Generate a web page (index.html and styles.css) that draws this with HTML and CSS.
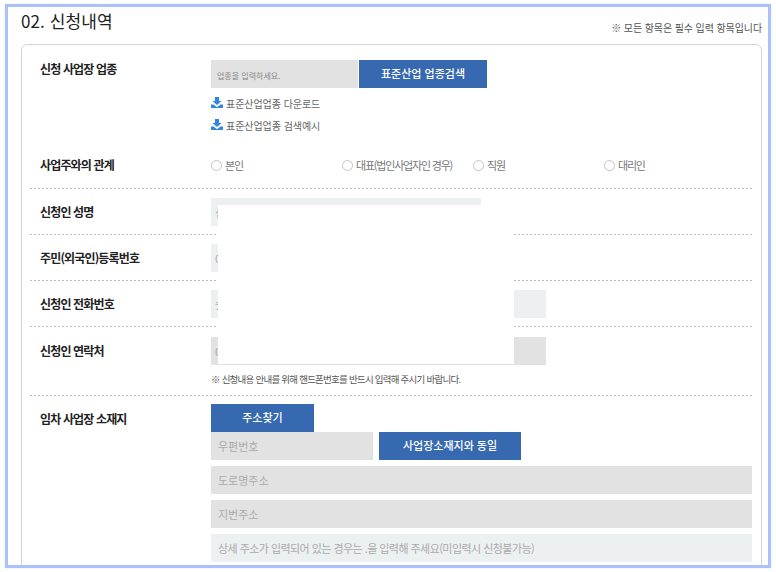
FILE: index.html
```html
<!DOCTYPE html>
<html lang="ko">
<head>
<meta charset="utf-8">
<title>신청내역</title>
<link rel="stylesheet" href="styles.css">
</head>
<body>
<div class="frame">
  <div class="head">
    <h2 class="title">02. 신청내역</h2>
    <p class="req">※ 모든 항목은 필수 입력 항목입니다</p>
  </div>
  <div class="panel">
    <div class="row row-a">
      <div class="label">신청 사업장 업종</div>
      <div class="body">
        <div class="line">
          <div class="field gray w147 tiny">업종을 입력하세요.</div>
          <div class="btn w128 join">표준산업 업종검색</div>
        </div>
        <div class="link first">
          <svg class="dl" viewBox="0 0 12 11"><path d="M4 0h4v4h2.6L6 8 1.400 4H4z"/><path d="M0 7.500h2.500L6 10.200 9.500 7.500H12V11H0z"/></svg>
          <span>표준산업업종 다운로드</span>
        </div>
        <div class="link">
          <svg class="dl" viewBox="0 0 12 11"><path d="M4 0h4v4h2.6L6 8 1.400 4H4z"/><path d="M0 7.500h2.500L6 10.200 9.500 7.500H12V11H0z"/></svg>
          <span>표준산업업종 검색예시</span>
        </div>
      </div>
    </div>
    <div class="row row-b dashed">
      <div class="label">사업주와의 관계</div>
      <div class="radios">
        <div class="radio"><i></i>본인</div>
        <div class="radio"><i></i>대표(법인사업자인 경우)</div>
        <div class="radio"><i></i>직원</div>
        <div class="radio"><i></i>대리인</div>
      </div>
    </div>
    <div class="row row-c dashed">
      <div class="label">신청인 성명</div>
      <div class="field pale w270 peek">신청인 성명</div>
    </div>
    <div class="row row-c dashed">
      <div class="label">주민(외국인)등록번호</div>
      <div class="field pale w270 peek">000000-0000000</div>
    </div>
    <div class="row row-c dashed">
      <div class="label">신청인 전화번호</div>
      <div class="field pale w335 peek">숫자만 입력</div>
    </div>
    <div class="row row-d dashed">
      <div class="label">신청인 연락처</div>
      <div class="body">
        <div class="field gray w335 peek">010-0000-0000</div>
        <p class="note">※ 신청내용 안내를 위해 핸드폰번호를 반드시 입력해 주시기 바랍니다.</p>
      </div>
    </div>
    <div class="row row-e">
      <div class="label">임차 사업장 소재지</div>
      <div class="body addr">
        <div class="btn w103">주소찾기</div>
        <div class="line gap6">
          <div class="field gray w162">우편번호</div>
          <div class="btn w142">사업장소재지와 동일</div>
        </div>
        <div class="field gray full mt6">도로명주소</div>
        <div class="field gray full mt6">지번주소</div>
        <div class="field pale full mt6 long">상세 주소가 입력되어 있는 경우는 .을 입력해 주세요(미입력시 신청불가능)</div>
      </div>
    </div>
    <div class="mask"></div>
  </div>
</div>
</body>
</html>
```

FILE: styles.css
```css
* { box-sizing: border-box; }
html, body { margin: 0; padding: 0; background: #fff; }
body {
  width: 776px;
  height: 572px;
  overflow: hidden;
  padding: 4px 5px;
  font-family: "Noto Sans CJK KR", "Noto Sans", sans-serif;
}
.frame {
  width: 766px;
  height: 564px;
  border: 3px solid #a9c2fb;
  padding: 0 6px 0 13px;
  background: #fff;
  overflow: hidden;
  box-shadow: 0 0 1px #c8d6fa;
}
.head {
  height: 37px;
  display: flex;
  justify-content: space-between;
}
.title {
  margin: 0;
  font-size: 17px;
  line-height: 27px;
  font-weight: 400;
  letter-spacing: 0.1px;
  color: #222;
}
.req {
  margin: 0;
  padding-top: 14px;
  font-size: 10px;
  line-height: 14px;
  color: #555;
  letter-spacing: -0.1px;
}
.panel {
  position: relative;
  height: 540px;
  border: 1px solid #d4d4d8;
  border-radius: 6px;
  padding: 0 8px;
}
.row {
  display: flex;
  align-items: flex-start;
  width: 723px;
}
.dashed {
  background: repeating-linear-gradient(90deg, #bdbdbd 0 2px, transparent 2px 4px) left bottom / 100% 1px no-repeat;
}
.label {
  width: 181px;
  flex: none;
  padding-left: 10px;
  font-size: 12px;
  line-height: 18px;
  font-weight: 700;
  letter-spacing: -0.85px;
  color: #222;
}
.row-a { height: 103px; padding-top: 15px; }
.row-b { height: 41px; padding-top: 8px; }
.row-c { height: 46px; padding-top: 9px; }
.row-c .label { padding-top: 5px; }
.row-d { height: 69px; padding-top: 10px; }
.row-d .label { padding-top: 5px; }
.row-e { padding-top: 8px; }
.row-e .label { padding-top: 6px; }
.line { display: flex; }
.gap6 { gap: 6px; }
.field {
  height: 28px;
  flex: none;
  padding-left: 7px;
  font-size: 11px;
  line-height: 28px;
  color: #aaa;
  white-space: nowrap;
}
.peek { padding-left: 4px; overflow: hidden; }
.long { letter-spacing: -0.55px; }
.gray { background: #e2e2e2; }
.pale { background: #edf0f1; }
.tiny { font-size: 8px; color: #888; padding-top: 2px; padding-left: 6px; }
.btn {
  height: 28px;
  flex: none;
  background: #3669b0;
  color: #fff;
  font-size: 11px;
  line-height: 27px;
  font-weight: 500;
  text-align: center;
}
.w147 { width: 147px; }
.w128 { width: 128px; }
.join { margin-left: 1px; }
.w270 { width: 270px; }
.w335 { width: 335px; }
.w103 { width: 103px; }
.w162 { width: 162px; }
.w142 { width: 142px; }
.full { width: 541px; }
.mt6 { margin-top: 6px; }
.link {
  display: flex;
  align-items: center;
  gap: 3px;
  height: 22px;
  font-size: 10px;
  letter-spacing: -0.05px;
  color: #666;
}
.link.first { margin-top: 4px; }
.dl { width: 12px; height: 11px; fill: #2f86e8; margin-top: -2px; }
.radios { display: flex; }
.radio {
  width: 131px;
  height: 18px;
  display: flex;
  align-items: center;
  gap: 3px;
  font-size: 11px;
  letter-spacing: -1.2px;
  color: #777;
  white-space: nowrap;
}
.radio i {
  width: 11px;
  height: 11px;
  margin-right: 0;
  border: 1px solid #c4c4c4;
  border-radius: 50%;
  background: #fff;
}
.note {
  margin: 7px 0 0;
  font-size: 9.500px;
  line-height: 14px;
  letter-spacing: -0.76px;
  color: #555;
}
.mask {
  position: absolute;
  left: 196px;
  top: 160px;
  width: 296px;
  height: 159px;
  background: #fff;
}
```
